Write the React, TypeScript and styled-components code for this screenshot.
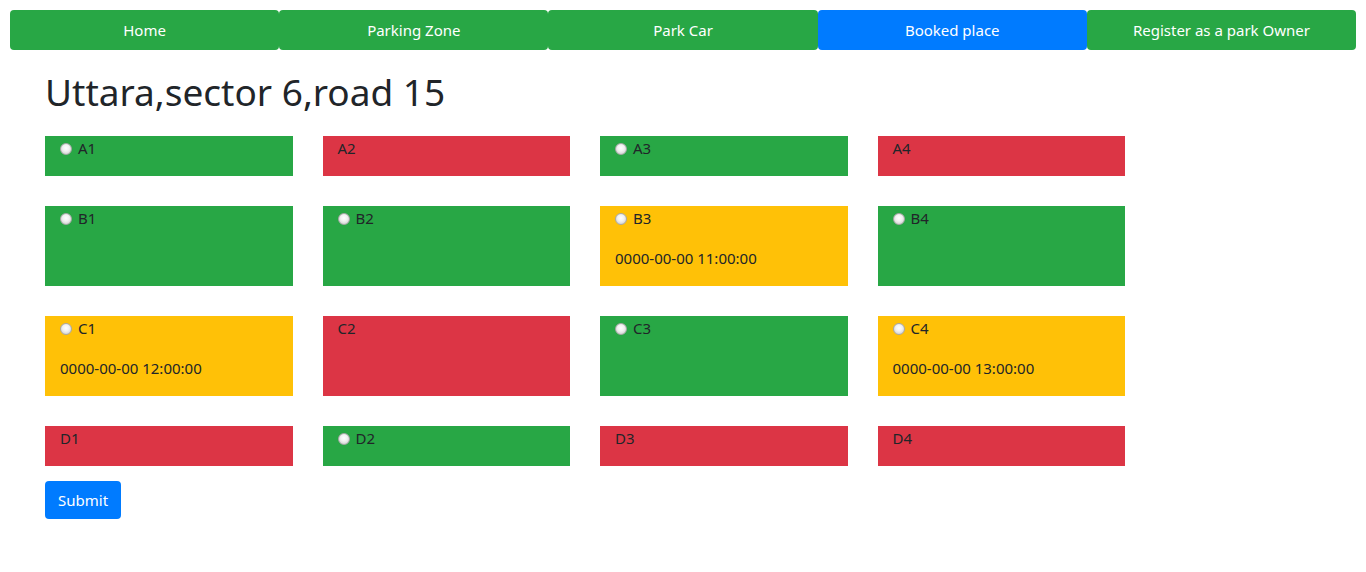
import React, { useState } from "react";
import styled, { createGlobalStyle } from "styled-components";

type Status = "free" | "taken" | "booked";

interface Slot {
  name: string;
  status: Status;
  time?: string;
}

const rows: Slot[][] = [
  [
    { name: "A1", status: "free" },
    { name: "A2", status: "taken" },
    { name: "A3", status: "free" },
    { name: "A4", status: "taken" },
  ],
  [
    { name: "B1", status: "free" },
    { name: "B2", status: "free" },
    { name: "B3", status: "booked", time: "0000-00-00 11:00:00" },
    { name: "B4", status: "free" },
  ],
  [
    { name: "C1", status: "booked", time: "0000-00-00 12:00:00" },
    { name: "C2", status: "taken" },
    { name: "C3", status: "free" },
    { name: "C4", status: "booked", time: "0000-00-00 13:00:00" },
  ],
  [
    { name: "D1", status: "taken" },
    { name: "D2", status: "free" },
    { name: "D3", status: "taken" },
    { name: "D4", status: "taken" },
  ],
];

const navItems = ["Home", "Parking Zone", "Park Car", "Booked place", "Register as a park Owner"];

const colors: Record<Status, string> = {
  free: "#28a745",
  taken: "#dc3545",
  booked: "#ffc107",
};

const App = () => {
  const [picked, setPicked] = useState("");

  return (
    <>
      <GlobalStyle />
      <Page>
        <Nav>
          {navItems.map((item) => (
            <NavButton key={item} $active={item === "Booked place"}>
              {item}
            </NavButton>
          ))}
        </Nav>
        <Main>
          <Title>Uttara,sector 6,road 15</Title>
          <SlotForm onSubmit={(e) => e.preventDefault()}>
            {rows.map((row, i) => (
              <SlotRow key={i}>
                {row.map((slot) => (
                  <SlotCard key={slot.name} $status={slot.status}>
                    <SlotLabel>
                      {slot.status !== "taken" && (
                        <Radio
                          type="radio"
                          name="slot"
                          checked={picked === slot.name}
                          onChange={() => setPicked(slot.name)}
                        />
                      )}
                      {slot.name}
                    </SlotLabel>
                    {slot.time && <SlotTime>{slot.time}</SlotTime>}
                  </SlotCard>
                ))}
              </SlotRow>
            ))}
            <SubmitBtn type="submit">Submit</SubmitBtn>
          </SlotForm>
        </Main>
      </Page>
    </>
  );
};

export default App;

const GlobalStyle = createGlobalStyle`
  body {
    margin: 0;
    background: #fff;
    color: #212529;
    font-family: "Segoe UI", "Noto Sans", sans-serif;
    font-size: 16px;
    line-height: 1.5;
  }
`;

const Page = styled.div`
  padding: 10px;
`;

const Nav = styled.nav`
  display: flex;
`;

const NavButton = styled.button<{ $active: boolean }>`
  flex: 1;
  height: 40px;
  border: none;
  border-radius: 4px;
  background: ${(p) => (p.$active ? "#007bff" : "#28a745")};
  color: #fff;
  font-family: inherit;
  font-size: 15px;
  cursor: pointer;
`;

const Main = styled.div`
  padding: 0 35px;
`;

const Title = styled.h1`
  margin: 18px 0 20px;
  font-size: 37px;
  font-weight: 400;
  line-height: 48px;
  color: #212529;
`;

const SlotForm = styled.form`
  display: flex;
  flex-direction: column;
  align-items: flex-start;
  gap: 30px;
`;

const SlotRow = styled.div`
  display: grid;
  grid-template-columns: repeat(4, 247.5px);
  column-gap: 30px;
`;

const SlotCard = styled.div<{ $status: Status }>`
  background: ${(p) => colors[p.$status]};
  padding: 0 15px 16px;
  font-size: 15px;
`;

const SlotLabel = styled.label`
  display: flex;
  align-items: center;
  height: 24px;
  padding-top: 1px;
  box-sizing: border-box;
`;

const Radio = styled.input`
  appearance: none;
  width: 12px;
  height: 12px;
  margin: 0 6px 0 0;
  border: 1px solid #a8a8a8;
  border-radius: 50%;
  background: radial-gradient(circle at 50% 40%, #ffffff 0%, #f2f2f2 40%, #c4c4c4 100%);
  box-sizing: border-box;

  &:checked {
    background: radial-gradient(circle, #333 0 30%, #f2f2f2 40%, #c4c4c4 100%);
  }
`;

const SlotTime = styled.p`
  margin: 16px 0 0;
  line-height: 24px;
`;

const SubmitBtn = styled.button`
  margin-top: -15px;
  height: 38px;
  padding: 0 13px;
  border: none;
  border-radius: 4px;
  background: #007bff;
  color: #fff;
  font-family: inherit;
  font-size: 15px;
  cursor: pointer;
`;
